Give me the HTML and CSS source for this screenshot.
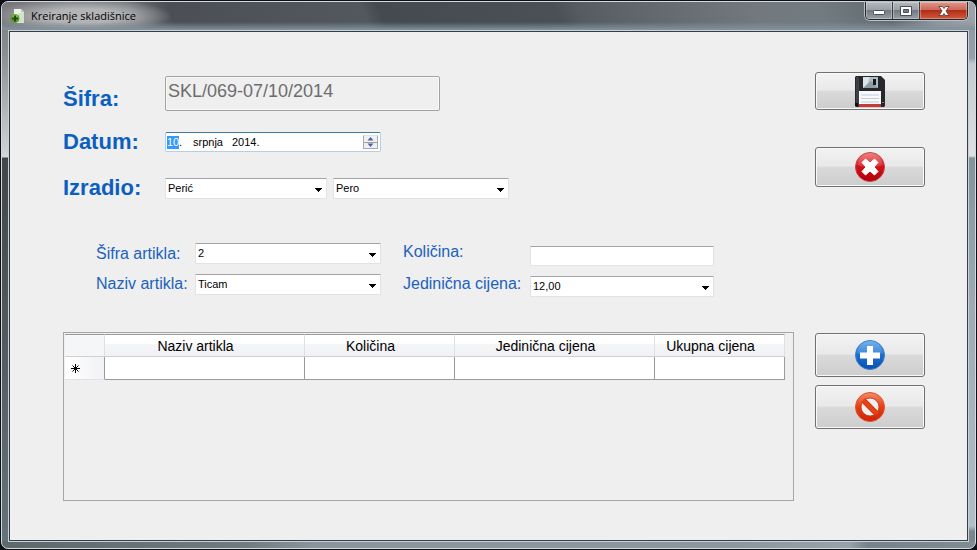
FILE: index.html
```html
<!DOCTYPE html>
<html lang="hr">
<head>
<meta charset="utf-8">
<meta name="viewport" content="width=device-width, initial-scale=1">
<title>Kreiranje skladišnice</title>
<link rel="stylesheet" href="styles.css">
</head>
<body>
<div class="window">
  <header class="titlebar">
    <svg class="app-icon" width="16" height="16" viewBox="0 0 16 16" aria-hidden="true">
      <path d="M4 1h7l3 3v11H4z" fill="#eef3ea"/>
      <path d="M11 1v3h3z" fill="#b9cdb4"/>
      <path d="M8 5l6-1v11H8z" fill="#d3e2cd"/>
      <circle cx="5" cy="10.500" r="4.500" fill="#5f9a2c"/>
      <circle cx="5" cy="9" r="3" fill="#86b94e"/>
      <path d="M4 7.500h2v2h2v2H6v2H4v-2H2v-2h2z" fill="#1f4a10"/>
    </svg>
    <h1 class="title">Kreiranje skladišnice</h1>
    <div class="caption">
      <button class="cap" type="button" aria-label="Minimiziraj">
        <svg width="14" height="12" viewBox="0 0 14 12"><rect x="1.500" y="5.500" width="11" height="4" rx="1" fill="#fff" stroke="#4a4f55"/></svg>
      </button>
      <button class="cap" type="button" aria-label="Maksimiziraj">
        <svg width="14" height="12" viewBox="0 0 14 12"><path fill-rule="evenodd" d="M1.500 1.500h11v9h-11zM4.500 4.500h5v3h-5z" fill="#fff" stroke="#4a4f55"/></svg>
      </button>
      <button class="cap cap-close" type="button" aria-label="Zatvori">
        <svg width="14" height="12" viewBox="0 0 14 12"><path d="M2 1.500h3.500L7 3.500l1.500-2H12L9 6l3 4.500H8.500L7 8.500l-1.500 2H2L5 6z" fill="#fff" stroke="#5a3030" stroke-width=".8"/></svg>
      </button>
    </div>
  </header>

  <main class="client">
    <form class="form" id="doc">
      <section class="document">
        <div class="row row-code">
          <label class="label" for="sifra">Šifra:</label>
          <input class="code" id="sifra" type="text" value="SKL/069-07/10/2014" disabled>
        </div>
        <div class="row">
          <label class="label" for="dan">Datum:</label>
          <div class="date">
            <input class="part day" id="dan" type="text" value="10" aria-label="Dan"><span class="dot">.</span>
            <input class="part month" type="text" value="srpnja" aria-label="Mjesec">
            <input class="part year" type="text" value="2014." aria-label="Godina">
            <div class="spinner">
              <button class="spin" type="button" aria-label="Gore"><svg width="7" height="4" viewBox="0 0 7 4"><path d="M3.500 0L6.500 3.500h-6z" fill="#4f5fa5"/></svg></button>
              <button class="spin" type="button" aria-label="Dolje"><svg width="7" height="4" viewBox="0 0 7 4"><path d="M.5 .5h6L3.500 4z" fill="#4f5fa5"/></svg></button>
            </div>
          </div>
        </div>
        <div class="row">
          <label class="label" for="prezime">Izradio:</label>
          <div class="people">
            <select class="field" id="prezime"><option>Perić</option></select>
            <select class="field" aria-label="Ime"><option>Pero</option></select>
          </div>
        </div>
      </section>

      <section class="item">
        <div class="names names-left">
          <label for="sifra-artikla">Šifra artikla:</label>
          <label for="naziv-artikla">Naziv artikla:</label>
        </div>
        <div class="fields">
          <select class="field" id="sifra-artikla"><option>2</option></select>
          <select class="field" id="naziv-artikla"><option>Ticam</option></select>
        </div>
        <div class="names names-right">
          <label for="kolicina">Količina:</label>
          <label for="cijena">Jedinična cijena:</label>
        </div>
        <div class="fields fields-right">
          <input class="field" id="kolicina" type="text">
          <select class="field" id="cijena"><option>12,00</option></select>
        </div>
      </section>
    </form>

    <div class="actions actions-main">
      <button class="btn save" type="submit" form="doc" aria-label="Spremi">
        <svg width="30" height="31" viewBox="0 0 30 31">
          <path d="M1 0h25l4 4v26l-1 1H1l-1-1V1z" fill="#26282b"/>
          <path d="M1 1h3v29H1z" fill="#3d4044"/>
          <path d="M0 27h3v3H0zM27 25h2v3h-2z" fill="#0c0d0e"/>
          <circle cx="28" cy="26.500" r=".8" fill="#b8bcc0"/>
          <path d="M8 1h15v11H8z" fill="#aebcc3"/>
          <path d="M8 1h7l-4 11H8z" fill="#dbe4e8"/>
          <path d="M8 12l8-7 7 7z" fill="#8d9ca4"/>
          <path d="M18 3h3v6h-3z" fill="#15171a"/>
          <path d="M4 15h22v13H4z" fill="#f8f9fb"/>
          <path d="M6 19h18M6 22.500h18M6 26h18" stroke="#c5cbdc"/>
          <path d="M4 28h22v3H4z" fill="#c63a38"/>
        </svg>
      </button>
      <button class="btn cancel" type="button" aria-label="Odustani">
        <svg width="30" height="30" viewBox="0 0 30 30">
          <defs><linearGradient id="red" x2="0" y2="1"><stop offset="0" stop-color="#ef6a66"/><stop offset=".45" stop-color="#d3141c"/><stop offset="1" stop-color="#ae0008"/></linearGradient></defs>
          <circle cx="15" cy="15" r="14.500" fill="url(#red)" stroke="#c2474a"/>
          <path d="M2.500 13a12.500 12 0 0 1 25 0q-12.500 5-25 0z" fill="#fff" opacity=".16"/>
          <path d="M7 10.500L10.500 7 15 11 19.500 7 23 10.500 19 15l4 4.500-3.500 3.500-4.500-4-4.500 4L7 19.500 11 15z" fill="#fff" stroke="#fff" stroke-linejoin="round"/>
        </svg>
      </button>
    </div>

    <div class="grid-box">
      <table class="grid">
        <colgroup><col class="c-mark"><col class="c-wide"><col class="c-qty"><col class="c-wide"><col class="c-total"></colgroup>
        <thead>
          <tr><td></td><th scope="col">Naziv artikla</th><th scope="col">Količina</th><th scope="col">Jedinična cijena</th><th scope="col">Ukupna cijena</th></tr>
        </thead>
        <tbody>
          <tr>
            <td class="mark"><svg width="9" height="9" viewBox="0 0 9 9" role="img" aria-label="Novi redak"><path d="M4.500 0v9M0 4.500h9M1.500 1.500l6 6M7.500 1.500l-6 6" stroke="#000"/></svg></td>
            <td></td><td></td><td></td><td></td>
          </tr>
        </tbody>
      </table>
    </div>

    <div class="actions actions-grid">
      <button class="btn" type="button" aria-label="Dodaj">
        <svg width="30" height="30" viewBox="0 0 30 30">
          <defs><linearGradient id="blue" x2="0" y2="1"><stop offset="0" stop-color="#5fa6ea"/><stop offset=".5" stop-color="#1a6fd0"/><stop offset="1" stop-color="#0a4fb0"/></linearGradient></defs>
          <circle cx="15" cy="15" r="14.500" fill="url(#blue)" stroke="#3f7fc8"/>
          <path d="M2.500 13a12.500 12 0 0 1 25 0q-12.500 5-25 0z" fill="#fff" opacity=".14"/>
          <path d="M12 6h6v6.500h7v6h-7V25h-6v-6.500H5v-6h7z" fill="#fff"/>
        </svg>
      </button>
      <button class="btn" type="button" aria-label="Ukloni">
        <svg width="30" height="30" viewBox="0 0 30 30">
          <defs><linearGradient id="orange" x2="0" y2="1"><stop offset="0" stop-color="#f58a68"/><stop offset=".5" stop-color="#ea3c14"/><stop offset="1" stop-color="#cf2206"/></linearGradient></defs>
          <circle cx="15" cy="15" r="14.500" fill="url(#orange)" stroke="#d9552f"/>
          <circle cx="15" cy="15" r="9" fill="#f0efee" stroke="#b93112" stroke-width=".8"/>
          <path d="M8.500 8.500l13 13" stroke="#b93112" stroke-width="5.500"/>
          <path d="M8 8l14 14" stroke="#ea4018" stroke-width="4"/>
        </svg>
      </button>
    </div>
  </main>
</div>
</body>
</html>
```
FILE: styles.css
```css
* {
  box-sizing: border-box;
}

body {
  display: flex;
  min-height: 100vh;
  margin: 0;
  padding: 1px;
  background: #0c0f14;
  font-family: "Liberation Sans", Arial, sans-serif;
  color: #000;
}

button,
input,
select {
  margin: 0;
  font-family: inherit;
  color: inherit;
}

/* Window frame */

.window {
  flex: 1;
  display: flex;
  flex-direction: column;
  min-width: 0;
  padding: 0 6px 6px;
  border: 1px solid #d5dade;
  border-radius: 7px;
  background:
    linear-gradient(90deg, #5d686b, #6f7b7f 25%, #89959a 32%, #8b979d 75%, #97a2a9 87%, #76838a 89%, #7f8c92) bottom / 100% 7px no-repeat,
    linear-gradient(#77797c 0, #8b8d8f 50px, #cfd1d2 150px, #d6d8d9 155px, #42464b 156px, #50565a 300px, #66737a 100%) left / 8px 100% no-repeat,
    linear-gradient(#8b959e 0, #94a0ab 56px, #c3cbd0 62px, #dde1e3 154px, #82949b 156px, #9cabb2 300px, #b0bec6 96%, #78868c 97%) right / 8px 100% no-repeat,
    #6c757b;
}

.titlebar {
  display: flex;
  align-items: flex-start;
  height: 28px;
  margin: 0 -6px;
  padding: 0 7px 0 8px;
  border-radius: 6px 6px 0 0;
  background:
    linear-gradient(transparent 20px, #82929d 28px),
    radial-gradient(ellipse 90px 18px at 80px 14px, #b3b4b6 40%, transparent 100%),
    linear-gradient(65deg, #77797c 0, #6f7276 125px, #4b4f55 160px, #51565c 290px, #52585e 335px, #444a50 350px, #4a5056 510px, #555b61 530px, #626a70 600px, #71797f 690px, #727b81 750px, #636b72 810px, #8e979d 850px, #9da5ab 100%);
}

.app-icon {
  margin-top: 6px;
}

.title {
  flex: 1;
  margin: 6px 0 0 5px;
  font: 400 11px/16px "Open Sans", "Noto Sans", sans-serif;
}

.caption {
  display: flex;
  height: 18px;
  border: 1px solid #23282e;
  border-top: 0;
  border-radius: 0 0 5px 5px;
  box-shadow: 0 0 0 1px #b9c0c5;
  overflow: hidden;
}

.cap {
  display: flex;
  align-items: center;
  justify-content: center;
  width: 27px;
  padding: 0;
  border: 0;
  border-right: 1px solid #3a4047;
  background: linear-gradient(#b4b9bd, #9a9fa5 48%, #737a81 50%, #979fa6);
  box-shadow: inset 0 0 0 1px rgba(255, 255, 255, .3);
}

.cap-close {
  width: 47px;
  border-right: 0;
  background: linear-gradient(#dc9a8b, #cc6552 48%, #b32d18 50%, #cf5a3c);
}

.client {
  flex: 1;
  display: grid;
  grid-template-columns: minmax(0, 1fr) 110px;
  grid-template-rows: auto minmax(0, 1fr);
  column-gap: 21px;
  padding: 40px 42px 39px 53px;
  border: 1px solid #33404a;
  outline: 1px solid #c9d1d6;
  margin: 1px;
  background: #efefef;
}

/* Document fields */

.form {
  display: flex;
  flex-direction: column;
  gap: 40px;
  padding: 4px 0 35px;
}

.document {
  display: flex;
  flex-direction: column;
  gap: 16px;
}

.row {
  display: grid;
  grid-template-columns: 102px minmax(0, 1fr);
  align-items: center;
  min-height: 30px;
}

.row-code {
  align-items: end;
}

.label {
  font-size: 22px;
  line-height: 24px;
  font-weight: 700;
  color: #0a5fc0;
}

.code {
  width: 100%;
  max-width: 275px;
  height: 35px;
  padding: 0 2px 4px;
  border: 1px solid #a3a3a3;
  border-radius: 2px;
  background: #efefef;
  box-shadow: inset 0 0 0 1px #f8f8f8;
  font-size: 18px;
  color: #6d6d6d;
}

.date {
  display: flex;
  align-items: center;
  max-width: 216px;
  height: 20px;
  padding: 0 2px 0 1px;
  border: 1px solid #b5cfe7;
  border-top-color: #3d7bad;
  border-radius: 2px;
  background: #fff;
  font-size: 11px;
}

.part {
  height: 13px;
  padding: 0;
  border: 0;
  background: none;
  font-size: 11px;
}

.day {
  width: 12px;
  background: #3399ff;
  color: #fff;
}

.dot {
  width: 14px;
}

.month {
  width: 39px;
}

.year {
  width: 40px;
}

.spinner {
  display: flex;
  flex-direction: column;
  width: 15px;
  height: 14px;
  margin-left: auto;
  border: 1px solid #a9a9ac;
  border-top-color: #e4e4e8;
}

.spin {
  flex: 1;
  display: flex;
  align-items: center;
  justify-content: center;
  min-height: 0;
  padding: 0;
  border: 0;
  background: #f0f0f4;
}

.spin + .spin {
  border-top: 1px solid #a0a0a0;
}

.people {
  display: grid;
  grid-template-columns: minmax(0, 162px) minmax(0, 176px);
  gap: 6px;
}

.field {
  width: 100%;
  height: 21px;
  padding: 0 2px 1px;
  border: 1px solid #e2e3e6;
  border-top-color: #a2a4a9;
  border-radius: 1px;
  background: #fff;
  font-size: 11px;
}

select.field {
  appearance: none;
  background:
    linear-gradient(#000, #000) right 7px top 9px / 1px 4px no-repeat,
    linear-gradient(#000, #000) right 6px top 9px / 3px 3px no-repeat,
    linear-gradient(#000, #000) right 5px top 9px / 5px 2px no-repeat,
    linear-gradient(#000, #000) right 4px top 9px / 7px 1px no-repeat,
    #fff;
}

/* Item fields */

.item {
  display: grid;
  grid-template-columns: 99px minmax(0, 186fr) 149px minmax(0, 184fr);
  padding: 0 80px 0 33px;
}

.names,
.fields {
  display: flex;
  flex-direction: column;
}

.names {
  font-size: 16px;
  line-height: 18px;
  white-space: nowrap;
  color: #1a62bd;
}

.names-left {
  gap: 12px;
  padding-top: 2px;
}

.names-right {
  gap: 14px;
  padding-left: 22px;
}

.fields {
  gap: 10px;
}

.fields-right {
  padding-top: 3px;
}

input.field {
  height: 20px;
}

/* Buttons */

.actions {
  display: flex;
  flex-direction: column;
}

.actions-main {
  gap: 37px;
}

.actions-grid {
  gap: 8px;
  padding-top: 1px;
}

.btn {
  display: flex;
  align-items: center;
  justify-content: center;
  width: 100%;
  height: 44px;
  padding: 0;
  border: 1px solid #707070;
  border-radius: 3px;
  background: linear-gradient(#f2f2f2, #e9e9e9 48%, #dadada 50%, #cdcdcd);
  box-shadow: inset 0 0 0 1px #f9f9f9;
}

.save {
  height: 38px;
}

.cancel {
  height: 40px;
}

/* Item table */

.grid-box {
  min-width: 0;
  padding: 1px;
  border: 1px solid #a6a6a6;
}

.grid {
  width: 720px;
  max-width: 100%;
  border-collapse: separate;
  border-spacing: 0;
  table-layout: fixed;
}

.c-mark {
  width: 40px;
}

.c-wide {
  width: 200px;
}

.c-qty {
  width: 150px;
}

.c-total {
  width: 130px;
}

.grid th,
.grid td {
  height: 23px;
  padding: 0;
  border-right: 1px solid #9b9b9b;
  border-bottom: 1px solid #9b9b9b;
  background: #fff;
}

.grid thead th,
.grid thead td {
  padding: 0 18px 0 0;
  border-top: 1px solid #9b9b9b;
  border-right-color: #dfe0e3;
  border-bottom-color: #d0d0d2;
  background: linear-gradient(#fff 40%, #f5f6f8 42%, #f0f1f4);
  font-size: 14px;
  line-height: 16px;
  font-weight: 400;
}

.grid thead td {
  background: #f5f6f8;
}

.grid .mark {
  padding-left: 6px;
  background: linear-gradient(90deg, #fff, #f1f2f5);
  border-bottom-color: #e2e2e4;
  line-height: 0;
}
```
